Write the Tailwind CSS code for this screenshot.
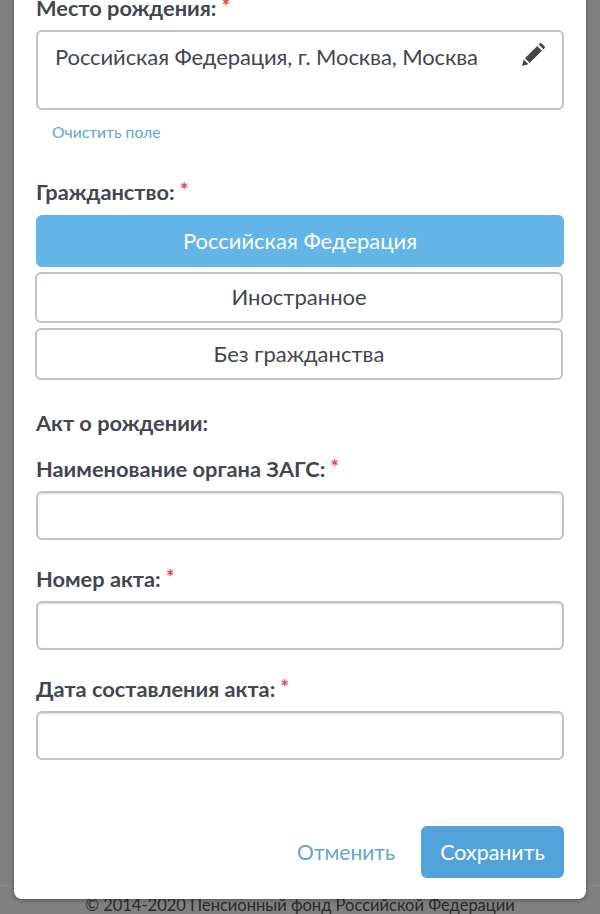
<!DOCTYPE html>
<html lang="ru">
<head>
    <meta charset="UTF-8">
    <meta name="viewport" content="width=device-width, initial-scale=1.0">
    <title>Место рождения</title>
    <script src="https://cdn.jsdelivr.net/npm/@tailwindcss/browser@4"></script>
</head>
<body class="bg-[#808080] h-[914px] overflow-hidden relative font-['Lato',sans-serif]">

    <!-- Page footer behind the overlay -->
    <div class="h-[885px]"></div>
    <footer class="border-t border-[#8c8c8c] h-[29px] pt-[8px] text-center text-[16.5px] leading-[22px] text-[#2b2b2b]">
        © 2014-2020 Пенсионный фонд Российской Федерации
    </footer>

    <!-- Modal -->
    <div class="absolute left-[14px] top-[-20px] w-[572px] h-[919px] bg-white rounded-b-lg shadow-[0_1px_5px_rgba(0,0,0,0.35)] px-[22px] text-[#434651]">

        <!-- Birth place -->
        <div class="h-[42px] flex items-end">
            <label class="text-[21.8px] leading-[28px] font-bold">Место рождения: <span class="text-[#e5473f] align-top text-[20px] leading-[25px]">*</span></label>
        </div>
        <div class="mt-[8px] h-[80px] border-2 border-[#c0c1ca] rounded-md pl-[17px] pr-[16px] pt-[9px] flex justify-between items-start">
            <span class="text-[22px] leading-[32px] tracking-[-0.1px]">Российская Федерация, г. Москва, Москва</span>
            <svg class="w-[25px] h-[25px] mt-[1px]" viewBox="0 0 24 24" fill="#434651"><path d="M1 23l1.6-6.2 4.6 4.6zM3.8 15.7L15.6 3.9l4.5 4.5L8.3 20.2zM17 2.5l1.3-1.3a1 1 0 0 1 1.4 0l3.1 3.1a1 1 0 0 1 0 1.4L21.5 7z"/></svg>
        </div>
        <a class="block mt-[12px] ml-[16px] text-[15.7px] leading-[20px] text-[#62a5cf]">Очистить поле</a>

        <!-- Citizenship -->
        <label class="block mt-[36px] text-[21.8px] leading-[28px] font-bold">Гражданство: <span class="text-[#e5473f] align-top text-[20px] leading-[25px]">*</span></label>
        <div class="mt-[9px] flex flex-col">
            <button class="h-[52px] w-[528px] pb-[2px] bg-[#63b5e8] rounded-md text-white text-[22px]">Российская Федерация</button>
            <button class="h-[51px] w-[528px] pb-[2px] ml-[-1px] mt-[5px] border-2 border-[#c0c1ca] rounded-md text-[22px]">Иностранное</button>
            <button class="h-[52px] w-[528px] pb-[2px] ml-[-1px] mt-[5px] border-2 border-[#c0c1ca] rounded-md text-[22px]">Без гражданства</button>
        </div>

        <!-- Birth certificate -->
        <div class="mt-[29px] text-[21.8px] leading-[28px] font-bold">Акт о рождении:</div>

        <label class="block mt-[18px] text-[21.8px] leading-[28px] font-bold">Наименование органа ЗАГС: <span class="text-[#e5473f] align-top text-[20px] leading-[25px]">*</span></label>
        <input class="block mt-[8px] w-[528px] h-[49px] border-2 border-[#c0c1ca] rounded-md shadow-[inset_0_1px_2px_rgba(0,0,0,0.15)]">

        <label class="block mt-[25px] text-[21.8px] leading-[28px] font-bold">Номер акта: <span class="text-[#e5473f] align-top text-[20px] leading-[25px]">*</span></label>
        <input class="block mt-[8px] w-[528px] h-[49px] border-2 border-[#c0c1ca] rounded-md shadow-[inset_0_1px_2px_rgba(0,0,0,0.15)]">

        <label class="block mt-[25px] text-[21.8px] leading-[28px] font-bold">Дата составления акта: <span class="text-[#e5473f] align-top text-[20px] leading-[25px]">*</span></label>
        <input class="block mt-[8px] w-[528px] h-[49px] border-2 border-[#c0c1ca] rounded-md shadow-[inset_0_1px_2px_rgba(0,0,0,0.15)]">

        <!-- Actions -->
        <div class="mt-[66px] flex justify-end items-center gap-[26px]">
            <button class="text-[21px] text-[#62a5cf]">Отменить</button>
            <button class="w-[143px] h-[52px] bg-[#52a3d9] rounded-md text-white text-[21.4px]">Сохранить</button>
        </div>
    </div>
</body>
</html>
